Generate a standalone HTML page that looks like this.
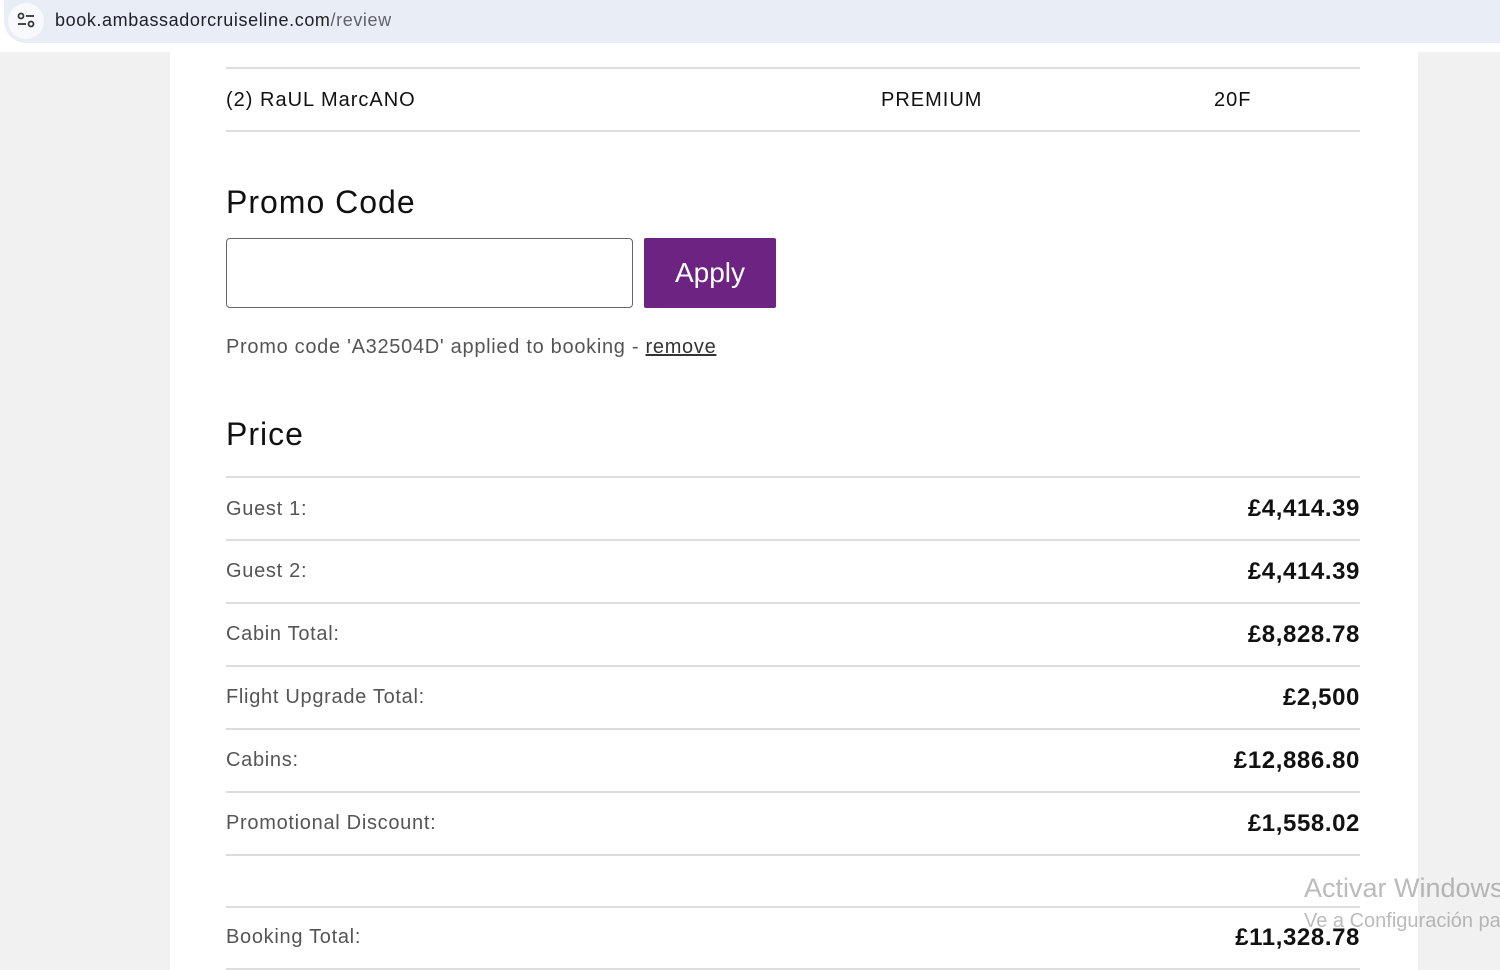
<!DOCTYPE html>
<html><head><meta charset="utf-8"><style>
*{margin:0;padding:0;box-sizing:border-box}
body{width:1500px;height:970px;overflow:hidden;background:#f1f1f1;font-family:"Liberation Sans",sans-serif;position:relative}
.bar{position:absolute;left:0;top:0;width:1500px;height:52px;background:#fff;overflow:hidden}
.url{position:absolute;left:4px;top:0;width:1496px;height:43px;background:#e9eef6;border-radius:0 0 0 22px}
.ic{position:absolute;left:8px;top:3px;width:36px;height:36px;border-radius:50%;background:#f7f9fc}
.urlt{position:absolute;left:55px;top:10px;font-size:18px;color:#202124;letter-spacing:0.6px}
.urlt span{color:#5f6368}
.page{position:absolute;left:170px;top:52px;width:1248px;height:918px;background:#fff}
.t{position:absolute;color:#111;letter-spacing:1px}
.ln{position:absolute;left:56px;width:1134px;height:2px;background:#ddd}
.lab{position:absolute;left:56px;font-size:20px;color:#555;letter-spacing:0.7px;white-space:nowrap}
.val{position:absolute;right:58px;font-size:24px;color:#111;font-weight:bold;letter-spacing:0.6px}
h2{position:absolute;left:56px;font-size:32px;font-weight:normal;color:#111;letter-spacing:1px}
.wm{position:absolute;left:1304px;color:rgba(120,120,120,.5);white-space:nowrap}
.clip{position:absolute;left:0;top:0;width:1500px;height:970px;overflow:hidden}
</style></head><body>
<div class="bar"><div class="url"></div>
<div class="ic"><svg width="36" height="36" viewBox="0 0 36 36"><circle cx="13" cy="13" r="2.5" fill="none" stroke="#333" stroke-width="1.8"/><line x1="18" y1="13" x2="26" y2="13" stroke="#333" stroke-width="1.8"/><line x1="10" y1="21" x2="18" y2="21" stroke="#333" stroke-width="1.8"/><circle cx="23" cy="21" r="2.5" fill="none" stroke="#333" stroke-width="1.8"/></svg></div>
<div class="urlt">book.ambassadorcruiseline.com<span>/review</span></div></div>
<div class="page">
<div class="ln" style="top:15px"></div>
<div class="t" style="left:56px;top:37px;font-size:20px">(2) RaUL MarcANO</div>
<div class="t" style="left:711px;top:37px;font-size:20px">PREMIUM</div>
<div class="t" style="left:1044px;top:37px;font-size:20px">20F</div>
<div class="ln" style="top:78px"></div>
<h2 style="top:132px">Promo Code</h2>
<div style="position:absolute;left:56px;top:186px;width:407px;height:70px;border:1px solid #666;border-radius:4px"></div>
<div style="position:absolute;left:474px;top:186px;width:132px;height:70px;background:#6c2381;border-radius:2px;color:#fff;font-size:28px;text-align:center;line-height:70px">Apply</div>
<div class="lab" style="top:284px">Promo code 'A32504D' applied to booking - <span style="color:#333;text-decoration:underline">remove</span></div>
<h2 style="top:364px">Price</h2>
<div class="ln" style="top:424px"></div>
<div class="lab" style="top:446px">Guest 1:</div><div class="val" style="top:443px">£4,414.39</div>
<div class="ln" style="top:487px"></div>
<div class="lab" style="top:508px">Guest 2:</div><div class="val" style="top:506px">£4,414.39</div>
<div class="ln" style="top:550px"></div>
<div class="lab" style="top:571px">Cabin Total:</div><div class="val" style="top:569px">£8,828.78</div>
<div class="ln" style="top:613px"></div>
<div class="lab" style="top:634px">Flight Upgrade Total:</div><div class="val" style="top:632px">£2,500</div>
<div class="ln" style="top:676px"></div>
<div class="lab" style="top:697px">Cabins:</div><div class="val" style="top:695px">£12,886.80</div>
<div class="ln" style="top:739px"></div>
<div class="lab" style="top:760px">Promotional Discount:</div><div class="val" style="top:758px">£1,558.02</div>
<div class="ln" style="top:802px"></div>
<div class="ln" style="top:854px"></div>
<div class="lab" style="top:874px">Booking Total:</div><div class="val" style="top:872px">£11,328.78</div>
<div class="ln" style="top:916px"></div>
</div>
<div class="clip">
<div class="wm" style="top:873px;font-size:27px">Activar Windows</div>
<div class="wm" style="top:910px;font-size:20px">Ve a Configuración para activar Windows.</div>
</div>
</body></html>
